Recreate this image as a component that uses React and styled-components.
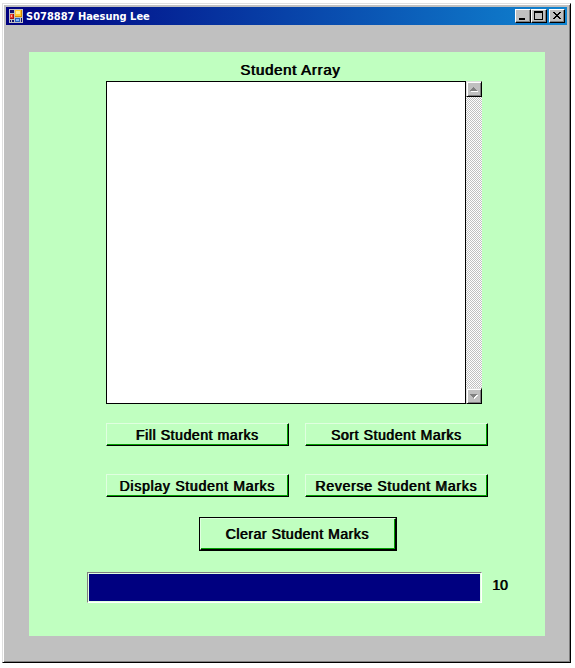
import React from 'react';
import styled, { createGlobalStyle } from 'styled-components';

const Global = createGlobalStyle`
  *, *::before, *::after { box-sizing: border-box; }
  body { margin: 0; background: #fff; overflow: hidden; }
  button { font: inherit; color: inherit; border-radius: 0; padding: 0; margin: 0; }
  svg { display: block; }
`;

const Page = styled.div`
  width: 575px;
  height: 668px;
  padding: 3px 4px 5px 2px;
`;

const Window = styled.main`
  width: 569px;
  height: 660px;
  background: #c0c0c0;
  border: 1px solid;
  border-color: #dfdfdf #000 #000 #dfdfdf;
  box-shadow: inset 1px 1px #fff, inset -1px -1px #808080;
  padding: 3px 3px 0;
`;

const TitleBar = styled.header`
  height: 18px;
  display: flex;
  align-items: center;
  padding: 0 2px 0 3px;
  background: linear-gradient(90deg, #000080, #1084d0);
`;

const Title = styled.h1`
  margin: 0 auto 0 3px;
  padding-top: 1px;
  color: #fff;
  font: bold 11px/17px 'DejaVu Sans Condensed', 'DejaVu Sans', sans-serif;
  font-stretch: condensed;
  white-space: nowrap;
`;

const WindowButton = styled.button`
  width: 16px;
  height: 14px;
  margin-left: ${(p) => (p.$gap ? '2px' : '0')};
  background: #c0c0c0;
  border: 1px solid;
  border-color: #fff #000 #000 #fff;
  box-shadow: inset -1px -1px #808080;
`;

const Panel = styled.section`
  width: 516px;
  height: 584px;
  margin: 27px 0 0 23px;
  padding-top: 8px;
  background: #c0ffc0;
  display: flex;
  flex-direction: column;
`;

const Label = styled.span`
  font-family: 'Liberation Sans', Arial, sans-serif;
  font-size: ${(p) => p.$size || 14}px;
  line-height: 20px;
  letter-spacing: ${(p) => p.$track}px;
  color: #000;
  text-shadow: 0.8px 0 0 #000;
  white-space: nowrap;
`;

const Heading = styled.div`
  height: 21px;
  padding-left: 211px;
`;

const ListBox = styled.div`
  width: 376px;
  height: 323px;
  margin-left: 77px;
  display: flex;
`;

const ListBody = styled.div`
  width: 360px;
  background: #fff;
  border: 1px solid #000;
`;

const ScrollBar = styled.div`
  width: 16px;
  display: flex;
  flex-direction: column;
  justify-content: space-between;
  background: repeating-conic-gradient(#c0c0c0 0 25%, #fff 0 50%) 0 0 / 2px 2px;
`;

const ScrollButton = styled.button`
  width: 16px;
  height: 16px;
  background: #c0c0c0;
  border: 1px solid;
  border-color: #dfdfdf #000 #000 #dfdfdf;
  box-shadow: inset 1px 1px #fff, inset -1px -1px #808080;
`;

const ButtonGrid = styled.div`
  display: grid;
  grid-template-columns: 183px 183px;
  gap: 28px 16px;
  margin: 19px 0 0 77px;
`;

const ActionButton = styled.button`
  height: 23px;
  display: flex;
  align-items: center;
  justify-content: center;
  padding: 0 1px 0 0;
  background: #c0ffc0;
  border: 1px solid;
  border-color: #e0ffe0 #000 #000 #e0ffe0;
  box-shadow: inset -1px -1px #00a000;
`;

const DefaultFrame = styled.div`
  width: 198px;
  height: 34px;
  margin: 20px 0 0 170px;
  border: 1px solid #000;
`;

const DefaultButton = styled(ActionButton)`
  width: 100%;
  height: 32px;
  padding: 0 2px 0 0;
`;

const ProgressRow = styled.div`
  display: flex;
  margin: 21px 0 0 58px;
`;

const Progress = styled.div`
  width: 395px;
  height: 31px;
  padding: 1px;
  border: 1px solid;
  border-color: #808080 #fff #fff #808080;
  background: #e0ffe0;
`;

const ProgressFill = styled.div`
  height: 100%;
  background: #000080;
`;

const Value = styled.div`
  margin: 3px 0 0 10px;
`;

const AppIcon = () => (
  <svg width="14" height="14" viewBox="0 0 14 14" shapeRendering="crispEdges">
    <path fill="#c0c0c0" d="M0 0h14v14H0z" />
    <path fill="#101070" d="M1 1h4v3H1zM1 11h1v2H1zM3 11h2v2H3zM12 9h1v4h-1z" />
    <path fill="#a81010" d="M1 5h4v5H1z" />
    <path fill="#e84030" d="M1 5h3v4H1z" />
    <path fill="#ffb0a0" d="M2 6h1v2H2z" />
    <path fill="#d48a00" d="M6 1h7v7H6z" />
    <path fill="#ffc830" d="M6 1h6v6H6z" />
    <path fill="#ffeb98" d="M7 2h4v3H7z" />
    <path fill="#2860bd" d="M6 9h5v4H6z" />
    <path fill="#82b4f8" d="M7 10h3v2H7z" />
  </svg>
);

const MinimizeIcon = () => (
  <svg width="14" height="12" shapeRendering="crispEdges"><path d="M3 8h6v2H3z" /></svg>
);
const MaximizeIcon = () => (
  <svg width="14" height="12" shapeRendering="crispEdges">
    <path fillRule="evenodd" d="M2 1h9v9H2zM3 3h7v6H3z" />
  </svg>
);
const CloseIcon = () => (
  <svg width="14" height="12" shapeRendering="crispEdges">
    <path d="M3 2h2v1h1v1h2V3h1V2h2v1h-1v1H9v1H8v1h1v1h1v1h1v1H9V8H8V7H6v1H5v1H3V8h1V7h1V6h1V5H5V4H4V3H3z" />
  </svg>
);

const arrows = {
  up: 'M6 5h1v1h1v1h1v1h1v1H3V8h1V7h1V6h1z',
  down: 'M3 5h7v1H9v1H8v1H7v1H6V8H5V7H4V6H3z',
};
const Arrow = ({ direction }) => (
  <svg width="14" height="14" shapeRendering="crispEdges">
    <path d={arrows[direction]} fill="#fff" transform="translate(1 1)" />
    <path d={arrows[direction]} fill="#808080" />
  </svg>
);

const actions = [
  ['Fill Student marks', 0.6],
  ['Sort Student Marks', 0.6],
  ['Display Student Marks', 0.74],
  ['Reverse Student Marks', 0.74],
];

export default function App() {
  return (
    <Page>
      <Global />
      <Window>
        <TitleBar>
          <AppIcon />
          <Title>S078887 Haesung Lee</Title>
          <WindowButton aria-label="Minimize"><MinimizeIcon /></WindowButton>
          <WindowButton aria-label="Maximize"><MaximizeIcon /></WindowButton>
          <WindowButton aria-label="Close" $gap><CloseIcon /></WindowButton>
        </TitleBar>
        <Panel>
          <Heading><Label $size={15} $track={0.72}>Student Array</Label></Heading>
          <ListBox>
            <ListBody />
            <ScrollBar>
              <ScrollButton aria-label="Scroll up"><Arrow direction="up" /></ScrollButton>
              <ScrollButton aria-label="Scroll down"><Arrow direction="down" /></ScrollButton>
            </ScrollBar>
          </ListBox>
          <ButtonGrid>
            {actions.map(([text, track]) => (
              <ActionButton key={text}><Label $track={track}>{text}</Label></ActionButton>
            ))}
          </ButtonGrid>
          <DefaultFrame>
            <DefaultButton><Label $track={0.55}>Clerar Student Marks</Label></DefaultButton>
          </DefaultFrame>
          <ProgressRow>
            <Progress><ProgressFill /></Progress>
            <Value><Label $track={0}>10</Label></Value>
          </ProgressRow>
        </Panel>
      </Window>
    </Page>
  );
}
